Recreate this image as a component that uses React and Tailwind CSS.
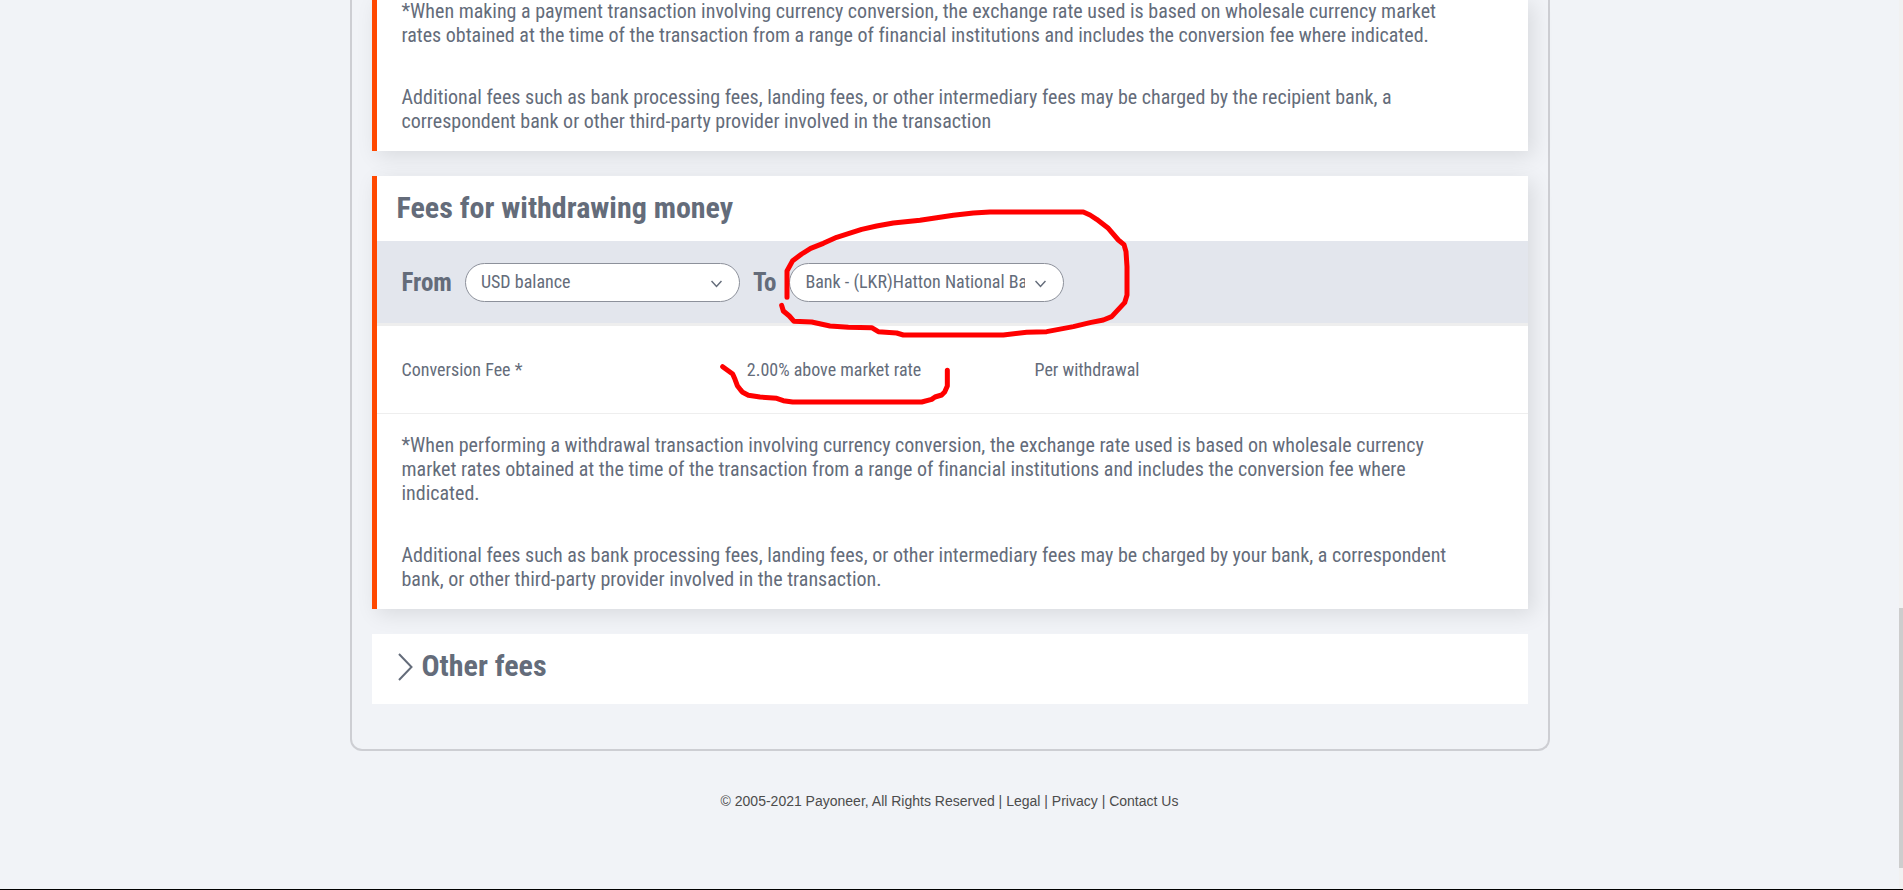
import { useState } from 'react'

const FROM_OPTIONS = ['USD balance', 'EUR balance', 'GBP balance']
const TO_OPTIONS = ['Bank - (LKR)Hatton National Bank PLC', 'Bank - (USD)Commercial Bank']

function PillSelect({ id, value, onChange, options }) {
  return (
    <div className="relative">
      <select
        id={id}
        value={value}
        onChange={(e) => onChange(e.target.value)}
        className="block w-[275px] h-[39px] pl-[15px] pr-[38px] pb-0.5 rounded-full border border-[#8d919b] bg-white text-lg text-[#646c7a] appearance-none"
      >
        {options.map((o) => (
          <option key={o}>{o}</option>
        ))}
      </select>
      <svg
        className="absolute right-[18px] top-[17px] pointer-events-none"
        width="11"
        height="8"
        viewBox="0 0 11 8"
        fill="none"
        stroke="#646c7a"
        strokeWidth="1.5"
      >
        <path d="M0.5 1 L5.5 6.5 L10.5 1" />
      </svg>
    </div>
  )
}

function Card({ children }) {
  return (
    <section className="relative border-l-[5px] border-[#ff4800] bg-white shadow-[5px_5px_20px_rgba(0,0,0,0.1)]">
      {children}
    </section>
  )
}

function Notes({ children }) {
  return (
    <div className="flex flex-col gap-[38px] pl-[25px] pr-[68px] pb-[18px] text-xl leading-6 [font-variant-ligatures:none]">
      {children}
    </div>
  )
}

// Red marker strokes around the bank and the rate
function Marker() {
  return (
    <svg
      className="absolute left-[343px] top-[14px] pointer-events-none"
      width="420"
      height="230"
      viewBox="0 0 1260 690"
      fill="none"
      stroke="#ff0000"
      strokeWidth="15"
      strokeLinecap="round"
      strokeLinejoin="round"
    >
      <path d="M201 322 L201 243 L218 212 L245 192 L272 175 L310 160 L350 142 L385 131 L425 118 L470 108 L520 99 L600 91 L700 76 L760 69 L810 66 L1090 66 L1110 75 L1130 88 L1165 115 L1195 150 L1212 164 L1218 185 L1221 230 L1221 315 L1214 338 L1175 380 L1150 390 L1110 398 L1060 410 L980 425 L920 427 L850 435 L550 435 L530 429 L475 425 L455 413 L385 412 L330 408 L275 396 L222 394 L208 378 L190 363 L185 346" />
      <path d="M8 530 L38 552 L45 568 L52 587 L62 600 L68 607 L85 616 L120 621 L170 625 L190 632 L218 636 L605 636 L635 628 L645 621 L665 615 L674 606 L682 588 L682 541" />
    </svg>
  )
}

export default function App() {
  const [from, setFrom] = useState(FROM_OPTIONS[0])
  const [to, setTo] = useState(TO_OPTIONS[0])

  return (
    <div className="flex min-h-screen overflow-hidden border-b border-black bg-[#f1f3f7] text-[#646c7a] font-['Roboto_Condensed','Roboto',sans-serif]">
      <div className="flex-1 min-w-0">
        <main className="max-w-[1200px] mx-auto -mt-px flex flex-col gap-[25px] px-5 pb-[45px] border-2 border-t-0 border-[#cdced3] rounded-b-xl">
          <Card>
            <Notes>
              <p>
                *When making a payment transaction involving currency conversion, the exchange rate used is based on wholesale currency market rates obtained at the time of the transaction from a range of financial institutions and includes the conversion fee where indicated.
              </p>
              <p>
                Additional fees such as bank processing fees, landing fees, or other intermediary fees may be charged by the recipient bank, a correspondent bank or other third-party provider involved in the transaction
              </p>
            </Notes>
          </Card>

          <Card>
            <h2 className="px-5 pt-3 pb-[13px] text-[30px] leading-10 font-bold">Fees for withdrawing money</h2>
            <div className="flex items-center gap-[13px] px-[25px] pt-[22px] pb-[21px] bg-[#e3e6ed] border-b-[3px] border-[#eeeeee]">
              <label htmlFor="from" className="text-[25px] leading-8 font-bold">From</label>
              <PillSelect id="from" value={from} onChange={setFrom} options={FROM_OPTIONS} />
              <label htmlFor="to" className="text-[25px] leading-8 font-bold">To</label>
              <PillSelect id="to" value={to} onChange={setTo} options={TO_OPTIONS} />
            </div>
            <table className="w-full table-fixed text-lg text-left border-b border-[#eeeeee]">
              <tbody>
                <tr className="h-[87px]">
                  <th scope="row" className="w-[30%] pl-[25px] pt-0.5 font-normal">Conversion Fee *</th>
                  <td className="w-[25%] pl-[25px] pt-0.5">2.00% above market rate</td>
                  <td className="pl-[25px] pt-0.5">Per withdrawal</td>
                </tr>
              </tbody>
            </table>
            <div className="pt-[19px]">
              <Notes>
                <p>
                  *When performing a withdrawal transaction involving currency conversion, the exchange rate used is based on wholesale currency market rates obtained at the time of the transaction from a range of financial institutions and includes the conversion fee where indicated.
                </p>
                <p>
                  Additional fees such as bank processing fees, landing fees, or other intermediary fees may be charged by your bank, a correspondent bank, or other third-party provider involved in the transaction.
                </p>
              </Notes>
            </div>
            <Marker />
          </Card>

          <section className="bg-white">
            <h2 className="text-[30px] leading-10 font-bold">
              <button type="button" className="flex items-center w-full gap-[9px] px-[26px] pt-3 pb-[18px] text-left">
                <svg className="mt-0.5" width="15" height="28" viewBox="0 0 15 28" fill="none" stroke="#646c7a" strokeWidth="2">
                  <path d="M1 1 L13.5 14 L1 27" />
                </svg>
                Other fees
              </button>
            </h2>
          </section>
        </main>

        <footer className="pt-10 text-center text-sm text-[#4c4c4c] font-['Liberation_Sans',Arial,sans-serif]">
          © 2005-2021 Payoneer, All Rights Reserved | <a href="#legal">Legal</a> | <a href="#privacy">Privacy</a> | <a href="#contact">Contact Us</a>
        </footer>
      </div>

      {/* Scroll track */}
      <div className="flex flex-col justify-end w-1 pb-[21px] bg-[#f1f1f1]">
        <div className="h-[260px] bg-[#cdcdcd]" />
      </div>
    </div>
  )
}
